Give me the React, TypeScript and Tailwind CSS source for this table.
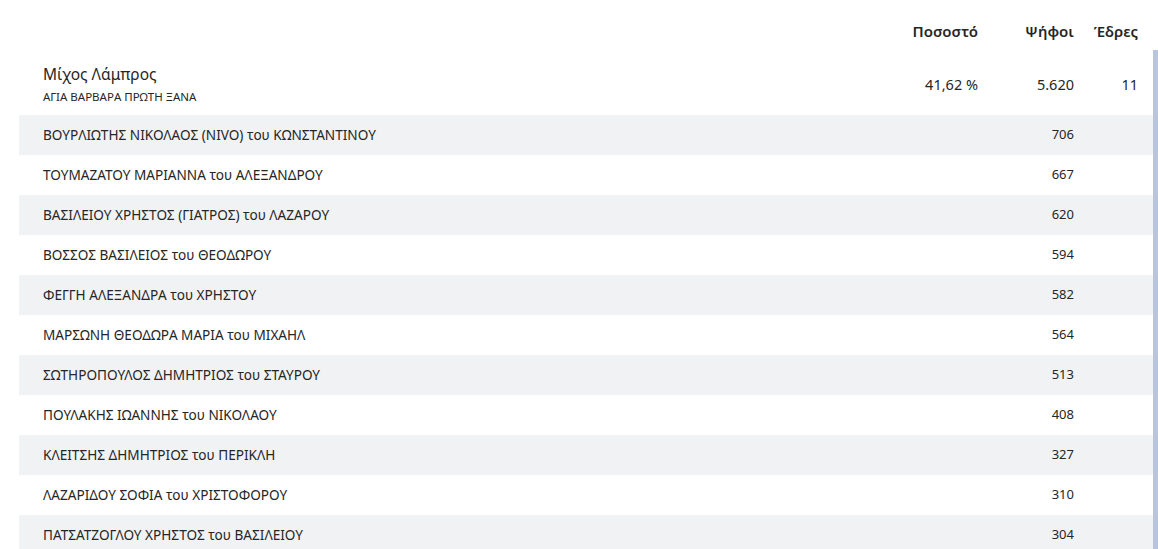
import React from "react";

const candidates: [string, string][] = [
  ["ΒΟΥΡΛΙΩΤΗΣ ΝΙΚΟΛΑΟΣ (NIVO) του ΚΩΝΣΤΑΝΤΙΝΟΥ", "706"],
  ["ΤΟΥΜΑΖΑΤΟΥ ΜΑΡΙΑΝΝΑ του ΑΛΕΞΑΝΔΡΟΥ", "667"],
  ["ΒΑΣΙΛΕΙΟΥ ΧΡΗΣΤΟΣ (ΓΙΑΤΡΟΣ) του ΛΑΖΑΡΟΥ", "620"],
  ["ΒΟΣΣΟΣ ΒΑΣΙΛΕΙΟΣ του ΘΕΟΔΩΡΟΥ", "594"],
  ["ΦΕΓΓΗ ΑΛΕΞΑΝΔΡΑ του ΧΡΗΣΤΟΥ", "582"],
  ["ΜΑΡΣΩΝΗ ΘΕΟΔΩΡΑ ΜΑΡΙΑ του ΜΙΧΑΗΛ", "564"],
  ["ΣΩΤΗΡΟΠΟΥΛΟΣ ΔΗΜΗΤΡΙΟΣ του ΣΤΑΥΡΟΥ", "513"],
  ["ΠΟΥΛΑΚΗΣ ΙΩΑΝΝΗΣ του ΝΙΚΟΛΑΟΥ", "408"],
  ["ΚΛΕΙΤΣΗΣ ΔΗΜΗΤΡΙΟΣ του ΠΕΡΙΚΛΗ", "327"],
  ["ΛΑΖΑΡΙΔΟΥ ΣΟΦΙΑ του ΧΡΙΣΤΟΦΟΡΟΥ", "310"],
  ["ΠΑΤΣΑΤΖΟΓΛΟΥ ΧΡΗΣΤΟΣ του ΒΑΣΙΛΕΙΟΥ", "304"],
];

const App = () => {
  return (
    <div className="flex h-[549px] w-[1158px] overflow-hidden bg-white font-['Noto_Sans',sans-serif] text-[#262626]">
      <div className="flex-1 pl-[19px]">
        {/* header */}
        <div className="flex h-[55px] pt-[21px] text-[15px] font-semibold leading-5">
          <div className="flex-1" />
          <div className="w-[120px] text-right">Ποσοστό</div>
          <div className="w-[96px] text-right">Ψήφοι</div>
          <div className="w-[64px] text-right">Έδρες</div>
          <div className="w-[15px]" />
        </div>
        {/* party */}
        <div className="flex h-[60px] items-center">
          <div className="flex-1 self-start pl-[24px] pt-[9px]">
            <div className="text-[15.5px] leading-5">Μίχος Λάμπρος</div>
            <div className="mt-[5px] text-[11.5px] leading-4">ΑΓΙΑ ΒΑΡΒΑΡΑ ΠΡΩΤΗ ΞΑΝΑ</div>
          </div>
          <div className="w-[120px] text-right text-[14.5px]">41,62 %</div>
          <div className="w-[96px] text-right text-[14.5px]">5.620</div>
          <div className="w-[64px] text-right text-[14.5px]">11</div>
          <div className="w-[15px]" />
        </div>
        {/* candidates */}
        {candidates.map(([name, votes], i) => (
          <div
            key={name}
            className={`flex h-[40px] items-center text-[13.6px] ${i % 2 === 0 ? "bg-[#f1f2f4]" : "bg-white"}`}
          >
            <div className="flex-1 pl-[24px]">{name}</div>
            <div className="w-[120px]" />
            <div className="w-[96px] text-right text-[13px]">{votes}</div>
            <div className="w-[64px]" />
            <div className="w-[15px]" />
          </div>
        ))}
      </div>
      <div className="mt-[50px] w-[5px] bg-[#b9c5dc]" />
    </div>
  );
};

export default App;
